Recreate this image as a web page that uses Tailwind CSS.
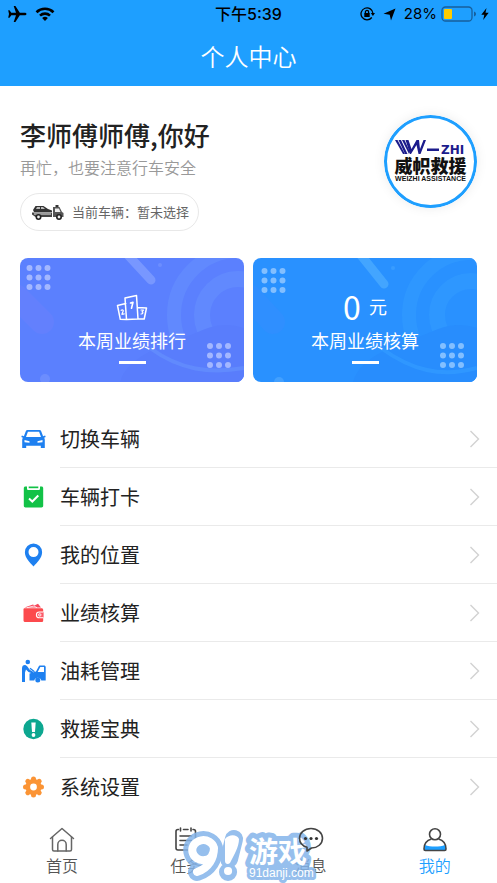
<!DOCTYPE html>
<html lang="zh-Hans">
<head>
  <meta charset="UTF-8">
  <meta name="viewport" content="width=device-width, initial-scale=1">
  <title>个人中心</title>
  <script src="https://cdn.jsdelivr.net/npm/@tailwindcss/browser@4"></script>
</head>
<body class="min-h-screen flex flex-col bg-white text-[#222] font-['Noto_Sans_CJK_SC',sans-serif]">

  <header class="bg-[#1e9fff]">
    <!-- status bar -->
    <div class="grid grid-cols-3 items-center h-7 px-2 text-black font-[Inter,'Noto_Sans_CJK_SC',sans-serif]">
      <div class="flex items-center gap-2">
        <svg class="w-[19px] h-[18px]" viewBox="0 0 19 18"><path d="M18.500 9c0-.9-1-1.200-2-1.200h-4.700L7.400 1H5.700l2.300 6.800H3.300L1.500 5.300H.2L1 9l-.8 3.700h1.300l1.800-2.500H8L5.700 17h1.700l4.400-6.800h4.700c1 0 2-.3 2-1.200z"/></svg>
        <svg class="w-5 h-4" viewBox="0 0 20 16" fill="none" stroke="#000" stroke-width="2.600"><path d="M1.500 6.200a12.300 12.300 0 0 1 17 0"/><path d="M5 9.600a7.300 7.300 0 0 1 10 0"/><path d="M10 15l-2.900-2.900a4.200 4.200 0 0 1 5.800 0z" fill="#000" stroke="none"/></svg>
      </div>
      <div class="text-center text-base font-medium whitespace-nowrap">下午5:39</div>
      <div class="flex items-center justify-end gap-1 whitespace-nowrap">
        <svg class="w-[15px] h-[14px] shrink-0" viewBox="0 0 15 14" fill="none" stroke="#000" stroke-width="1.300"><path d="M11.800 10.500A6 6 0 1 1 13 6.500"/><path d="M10.800 6h4.200l-2.100 3z" fill="#000" stroke="none"/><rect x="4.300" y="6" width="5.400" height="4" fill="#000" stroke="none"/><path d="M5.400 6.500V5a1.600 1.600 0 0 1 3.200 0v1.500"/></svg>
        <svg class="w-[13px] h-[13px] mx-1 shrink-0" viewBox="0 0 13 13"><path d="M12.500.5L8 12.500 6.700 6.700.5 5.800z"/></svg>
        <span class="text-[15px]">28%</span>
        <svg class="w-[36px] h-4 shrink-0" viewBox="0 0 36 16"><rect x="1" y="1" width="30" height="14" rx="3.500" fill="none" stroke="#175f9c" stroke-width="1.300"/><rect x="3" y="3" width="8" height="10" rx="1" fill="#ffcc00"/><path d="M33 5.500c1.300.5 2 1.400 2 2.500s-.7 2-2 2.500z" fill="#175f9c"/></svg>
        <svg class="w-[8px] h-3 shrink-0" viewBox="0 0 8 12"><path d="M5.500 0L.3 6.800h3L2.200 12l5.500-7.200H4.500z"/></svg>
      </div>
    </div>
    <h1 class="h-[58px] leading-[56px] text-center text-2xl font-[350] text-white">个人中心</h1>
  </header>

  <main class="flex-1">
    <section class="flex justify-between px-5 pt-[29px]">
      <div>
        <h2 class="text-[26px] leading-10 font-medium">李师傅师傅,你好</h2>
        <p class="text-base leading-6 font-[350] text-[#999]">再忙，也要注意行车安全</p>
        <button class="flex items-center gap-2 h-[38px] mt-[14px] pl-[10px] pr-[9px] rounded-full border border-[#e8e8e8] text-[13px] text-[#666]">
          <svg class="w-[33px] h-4" viewBox="0 0 33 16"><path d="M1 8.500h20V13H4.500L1 10.500z" fill="#444"/><path d="M2 6l2.500-4h8L17 5l4 1.500V8H3z" fill="#333"/><path d="M5 5l1-2h3v2zM10 3h2l2 2h-4z" fill="#bbb"/><path d="M22 3h6.500L31 8l1.500 1v4H22z" fill="#555"/><path d="M24 4.500h4L29.500 8H24z" fill="#eee"/><path d="M24.500 1h3v2h-3z" fill="#333"/><path d="M3 10h17" stroke="#eee"/><g fill="#eee" stroke="#222" stroke-width="1.600"><circle cx="7.500" cy="13" r="2.200"/><circle cx="28" cy="13" r="2.200"/></g></svg>
          当前车辆：暂未选择
        </button>
      </div>
      <svg class="w-[93px] h-[93px] rounded-full shadow-[0_0_12px_rgba(0,0,0,0.08)]" viewBox="0 0 93 93" role="img" aria-label="威帜救援">
        <circle cx="46.500" cy="46.500" r="45" fill="#fff" stroke="#1e9fff" stroke-width="3"/>
        <g fill="#1c1c8c">
          <path d="M11 25h2.500L21 39h-2z"/><path d="M14.500 25H17L23.500 39H21z"/><path d="M18 25h2.500L26 37l-1 2z"/>
          <path d="M21.500 25h3L27.500 34l5-9h2.500L36 34l3.500-9H42L36.500 39h-2l-2-9L27 39h-1z"/>
          <path d="M43 33.500h12V36H43z"/>
        </g>
        <text x="57" y="39" font-family="DejaVu Sans" font-size="12" font-weight="700" fill="#1c1c8c">ZHI</text>
        <text x="46.500" y="58" text-anchor="middle" font-family="Noto Sans CJK SC" font-size="18" font-weight="900" fill="#111">威帜救援</text>
        <text x="46.500" y="66" text-anchor="middle" font-family="Liberation Sans" font-size="7" font-weight="700" fill="#111">WEIZHI ASSISTANCE</text>
      </svg>
    </section>

    <section class="grid grid-cols-2 gap-[9px] px-5 mt-[27px] text-white text-lg">
      <a href="#" class="relative overflow-hidden h-[124px] rounded-lg bg-[#5b80fe]">
        <svg class="absolute inset-0 w-full h-full" viewBox="0 0 224 124" preserveAspectRatio="none" fill="none">
          <path d="M-4 38L22 64" stroke="#6380fd" stroke-width="24" stroke-linecap="round"/>
          <g stroke="#6189fe"><circle cx="218" cy="57" r="64" stroke-width="14"/><circle cx="218" cy="57" r="36" stroke-width="16"/></g>
          <path d="M100 124c8-28 48-38 78-50 20-9 32-8 46-4v54z" fill="#597dfc"/>
          <path d="M130 90c30 22 60 26 94 20" stroke="#618afd" stroke-width="4"/>
          <path d="M107-4l24 26" stroke="#7897ff" stroke-width="9" stroke-linecap="round"/>
          <circle cx="25" cy="121" r="5" fill="#6c8dfe"/><circle cx="140" cy="7" r="2" fill="#6c8dfe"/>
          <g stroke="#a3b7ff" stroke-width="6" stroke-linecap="round"><path d="M9.500 10h0M18.500 10h0M27.500 10h0M9.500 19.500h0M18.500 19.500h0M27.500 19.500h0M9.500 29h0M18.500 29h0M27.500 29h0"/><path d="M190 88h0M199 88h0M208 88h0M190 97.500h0M199 97.500h0M208 97.500h0M190 107h0M199 107h0M208 107h0"/></g>
        </svg>
        <div class="relative flex flex-col items-center pt-9">
          <svg class="w-8 h-[27px]" viewBox="0 0 32 27" fill="none" stroke="#fff" stroke-width="1.500" stroke-linejoin="round" stroke-linecap="round"><path d="M10.500 25.500L9 4l11.500-2.500L22 25l-11.500.5zM9.800 9.500L1.500 11.500l2.800 13.800 6.200.2M21.500 13.500l9 .5-2.300 11L22 25"/><path d="M14.500 9l2.500-.8-1.500 6" stroke-width="1.600"/><path d="M5.200 16.300c1.500-1 2.800 0 1.700 1.500l-1 2.500 2.300-.4M25 16l2.500.2-1.500 1.600c1.500.3 1 2.300-1 2.200" stroke-width="1.200"/></svg>
          <span class="leading-7 mt-[5px]">本周业绩排行</span>
          <span class="w-[27px] h-[3px] mt-[7px] bg-white"></span>
        </div>
      </a>
      <a href="#" class="relative overflow-hidden h-[124px] rounded-lg bg-[#2991ff]">
        <svg class="absolute inset-0 w-full h-full" viewBox="0 0 224 124" preserveAspectRatio="none" fill="none">
          <path d="M-4 38L20 64" stroke="#2f8fff" stroke-width="24" stroke-linecap="round"/>
          <g stroke="#2e97ff"><circle cx="218" cy="57" r="62" stroke-width="14"/><circle cx="218" cy="57" r="34" stroke-width="16"/></g>
          <path d="M100 124c8-28 48-38 78-50 20-9 32-8 46-4v54z" fill="#288dfd"/>
          <path d="M128 90c30 22 60 30 96 20" stroke="#2f97ff" stroke-width="4"/>
          <path d="M107-4l24 30" stroke="#43a5ff" stroke-width="9" stroke-linecap="round"/>
          <circle cx="26" cy="124" r="5" fill="#42a0ff"/><circle cx="140" cy="10" r="2" fill="#389cff"/>
          <g stroke="#83bfff" stroke-width="6" stroke-linecap="round"><path d="M11.500 13h0M20.500 13h0M29.500 13h0M11.500 22.500h0M20.500 22.500h0M29.500 22.500h0M11.500 32h0M20.500 32h0M29.500 32h0"/><path d="M190 88h0M199 88h0M208 88h0M190 97.500h0M199 97.500h0M208 97.500h0M190 107h0M199 107h0M208 107h0"/></g>
        </svg>
        <div class="relative flex flex-col items-center pt-7">
          <div class="flex items-center gap-2 h-10 leading-9"><span class="text-[32px]">0</span><span>元</span></div>
          <span class="leading-7">本周业绩核算</span>
          <span class="w-[27px] h-[3px] mt-[7px] bg-white"></span>
        </div>
      </a>
    </section>

    <ul class="mt-7 pl-[21px] text-[20px]">
      <li><a href="#" class="flex items-center gap-[14px]">
        <svg class="w-[25px] h-6" viewBox="0 0 25 24" fill="#1e80f0"><path fill-rule="evenodd" d="M6.500 3h12c.8 0 1.400.4 1.700 1.200l1.900 5 2-.7.6 1.600-1.600.7c.5.700.700 1.400.700 2.200V21h-4v-2.300H5.200V21h-4v-8c0-.8.2-1.500.7-2.200l-1.600-.7.600-1.600 2 .7 1.900-5C5.100 3.400 5.700 3 6.500 3zm.4 1.700L5 10h15l-1.900-5.300zM3.500 13v2.200l5 .6v-1.500zm18 0l-5 1.300v1.500l5-.6z"/></svg>
        <span class="flex-1 flex items-center justify-between h-[58px] pr-[17px] border-b border-[#eaeaea]">切换车辆<svg class="w-[11px] h-[18px]" viewBox="0 0 11 18" fill="none" stroke="#d2d2d2" stroke-width="1.400"><path d="M1.500 1l8 8-8 8"/></svg></span></a></li>
      <li><a href="#" class="flex items-center gap-[14px]">
        <svg class="w-[25px] h-6" viewBox="0 0 25 24"><path d="M4.500 1.500H6v2c0 1 .7 1.600 1.500 1.600h10c.8 0 1.500-.6 1.500-1.600v-2h1.500c1 0 1.700.7 1.700 1.700v17.600c0 1-.7 1.700-1.700 1.700h-16c-1 0-1.700-.7-1.700-1.700V3.200c0-1 .7-1.700 1.700-1.700z" fill="#12c247"/><path d="M7.700 1.500h9.600v1.700H7.700z" fill="#12c247"/><path d="M8 13.500l3.300 3 6-6" fill="none" stroke="#fff" stroke-width="2"/></svg>
        <span class="flex-1 flex items-center justify-between h-[58px] pr-[17px] border-b border-[#eaeaea]">车辆打卡<svg class="w-[11px] h-[18px]" viewBox="0 0 11 18" fill="none" stroke="#d2d2d2" stroke-width="1.400"><path d="M1.500 1l8 8-8 8"/></svg></span></a></li>
      <li><a href="#" class="flex items-center gap-[14px]">
        <svg class="w-[25px] h-6" viewBox="0 0 25 24" fill="#1e80f0"><path fill-rule="evenodd" d="M12.500.5a8.600 8.600 0 0 1 8.600 8.700c0 5.500-4.600 9.800-8.600 14.300C8.500 19 3.900 14.700 3.900 9.200A8.600 8.600 0 0 1 12.500.5zm0 3.600a5 5 0 1 0 0 10 5 5 0 0 0 0-10z"/></svg>
        <span class="flex-1 flex items-center justify-between h-[58px] pr-[17px] border-b border-[#eaeaea]">我的位置<svg class="w-[11px] h-[18px]" viewBox="0 0 11 18" fill="none" stroke="#d2d2d2" stroke-width="1.400"><path d="M1.500 1l8 8-8 8"/></svg></span></a></li>
      <li><a href="#" class="flex items-center gap-[14px]">
        <svg class="w-[25px] h-6" viewBox="0 0 25 24"><path d="M3.500 6.500L12 3.500l1.500 1L17 2.800l3 3.700z" fill="#f8485c"/><path d="M6 6.700l7-1.700 3 1.700" fill="none" stroke="#fff" stroke-width=".8"/><path d="M3.500 7.200h17c1 0 1.700.700 1.700 1.700v10.500c0 1-.7 1.700-1.700 1.700h-16c-1 0-2-.7-2-1.700V8.500c0-.8.5-1.300 1-1.300z" fill="#fc4a4d"/><path d="M22.500 11h-4.200a2.900 2.900 0 0 0 0 5.800h4.200" fill="#fb5b69" stroke="#fff" stroke-width="1.100"/><circle cx="18.800" cy="13.900" r="1.200" fill="none" stroke="#fff" stroke-width=".9"/></svg>
        <span class="flex-1 flex items-center justify-between h-[58px] pr-[17px] border-b border-[#eaeaea]">业绩核算<svg class="w-[11px] h-[18px]" viewBox="0 0 11 18" fill="none" stroke="#d2d2d2" stroke-width="1.400"><path d="M1.500 1l8 8-8 8"/></svg></span></a></li>
      <li><a href="#" class="flex items-center gap-[14px]">
        <svg class="w-[25px] h-6" viewBox="0 0 25 24" fill="#1e80f0"><circle cx="6.800" cy="3" r="2.300"/><path d="M1 23V9.500C1 7 2.500 5.800 4.700 6.200 6.500 6.600 7.500 9.500 9 11l3.500 2-1 1.500L7.500 13 5 10.500l-1 3V23z"/><path d="M9 9.300l4.500 3.500" stroke="#1e80f0" stroke-width="1.300"/><path fill-rule="evenodd" d="M8.500 14.500l6.500-2 2.700-5c.3-.7.700-1 1.500-1H23c1 0 1.700.7 1.700 1.500v13.500h-4.400a3.600 3.600 0 0 0-7 0H8.500zM19.300 8l-2.600 5h6.300V8z"/><circle cx="16.800" cy="21" r="2.500"/></svg>
        <span class="flex-1 flex items-center justify-between h-[58px] pr-[17px] border-b border-[#eaeaea]">油耗管理<svg class="w-[11px] h-[18px]" viewBox="0 0 11 18" fill="none" stroke="#d2d2d2" stroke-width="1.400"><path d="M1.500 1l8 8-8 8"/></svg></span></a></li>
      <li><a href="#" class="flex items-center gap-[14px]">
        <svg class="w-[25px] h-6" viewBox="0 0 25 24"><circle cx="12.500" cy="12" r="10.200" fill="#0da790"/><path d="M10.300 5.500h4.400L14 15h-3z" fill="#fff"/><circle cx="12.500" cy="18" r="1.900" fill="#fff"/></svg>
        <span class="flex-1 flex items-center justify-between h-[58px] pr-[17px] border-b border-[#eaeaea]">救援宝典<svg class="w-[11px] h-[18px]" viewBox="0 0 11 18" fill="none" stroke="#d2d2d2" stroke-width="1.400"><path d="M1.500 1l8 8-8 8"/></svg></span></a></li>
      <li><a href="#" class="flex items-center gap-[14px]">
        <svg class="w-[25px] h-6" viewBox="0 0 25 24"><g stroke="#fb9435" stroke-width="5" stroke-linecap="round"><path d="M12.500 4v16M4.500 12h16M6.800 6.300l11.400 11.400M18.200 6.300L6.800 17.700"/></g><circle cx="12.500" cy="12" r="8" fill="#fb9435"/><circle cx="12.500" cy="12" r="3.400" fill="#fff"/></svg>
        <span class="flex-1 flex items-center justify-between h-[58px] pr-[17px]">系统设置<svg class="w-[11px] h-[18px]" viewBox="0 0 11 18" fill="none" stroke="#d2d2d2" stroke-width="1.400"><path d="M1.500 1l8 8-8 8"/></svg></span></a></li>
    </ul>
  </main>

  <nav class="relative grid grid-cols-4 h-[67px] pt-[11px] text-base leading-6 font-[350] text-[#555]">
    <a href="#" class="flex flex-col items-center">
      <svg class="w-[26px] h-[26px]" viewBox="0 0 26 26" fill="none" stroke="#666" stroke-width="1.500" stroke-linecap="round" stroke-linejoin="round"><path d="M1.500 11.500L13 1.500l11.500 10"/><path d="M3.500 10v12.500c0 1 .5 1.500 1.500 1.500h16c1 0 1.500-.5 1.500-1.500V10"/><path d="M8.800 24v-6.500a4.200 4.200 0 0 1 8.400 0V24"/></svg>
      首页</a>
    <a href="#" class="flex flex-col items-center">
      <svg class="w-[26px] h-[26px]" viewBox="0 0 26 26" fill="none" stroke="#444" stroke-width="1.600" stroke-linecap="round"><path d="M5.500 2.500H5c-1.200 0-2 .8-2 2V21c0 1.200.8 2 2 2h15.500c1.200 0 2-.8 2-2V4.500c0-1.200-.8-2-2-2H20M10.500 2.500h4.500"/><path d="M7.500 1v3M18 1v3M7 9h11.500M7 13.500h11.500M7 18h7"/></svg>
      任务</a>
    <a href="#" class="flex flex-col items-center">
      <svg class="w-[26px] h-[26px]" viewBox="0 0 26 26"></svg>
      消息</a>
    <a href="#" class="flex flex-col items-center text-[#1e9fff]" aria-current="page">
      <svg class="w-[26px] h-[26px]" viewBox="0 0 26 26" fill="none" stroke="#444" stroke-width="1.600"><path d="M3 18c5 2 15 2 20 0l1 4.500c0 .7-.5 1-1 1H3c-.6 0-1-.3-1-1z" fill="#1e9fff" stroke="none"/><circle cx="13" cy="7.300" r="5.500"/><path d="M9.500 12C5 13.200 2 17 2 22c0 1 .4 1.500 1.300 1.500h19.400c.9 0 1.300-.5 1.300-1.500 0-5-3-8.800-7.500-10"/></svg>
      我的</a>

    <!-- watermark -->
    <svg class="absolute left-1/2 -translate-x-1/2 bottom-0 w-[140px] h-[58px] overflow-visible pointer-events-none" viewBox="0 0 140 58" stroke-linejoin="round" stroke-linecap="round" role="img" aria-label="91游戏 91danji.com">
      <g opacity=".85">
        <g fill="#84b4ea" stroke="#84b4ea" stroke-width="18">
          <path d="M35 23a11 10 0 1 0-9 12c5 0 9-5 9-12 0 10-5 20-17 24"/>
          <path d="M55 14L50 34M49 47h.1"/>
        </g>
        <g fill="#84b4ea" stroke="#84b4ea" stroke-width="10" font-family="Noto Sans CJK SC">
          <text x="70" y="38" font-size="29" font-weight="700">游戏</text>
          <text x="70" y="52" font-size="12" font-family="Liberation Sans" stroke-width="6">91danji.com</text>
        </g>
      </g>
      <g fill="none" stroke="#fff" stroke-width="8">
        <path d="M35 23a11 10 0 1 0-9 12c5 0 9-5 9-12 0 10-5 20-17 24"/>
        <path d="M46 14c4-5 12-5 14 0 0 8-5 16-9 24-2 2-5 1-5-2z" fill="#fff" stroke="none"/>
        <path d="M49 46h.1"/>
      </g>
      <g fill="#fff" font-family="Noto Sans CJK SC">
        <text x="70" y="38" font-size="29" font-weight="700">游戏</text>
        <text x="70" y="52" font-size="12" font-family="Liberation Sans">91danji.com</text>
      </g>
      <!-- message bubble stays readable above the mark -->
      <g transform="translate(119 1)" fill="none" stroke="#444" stroke-width="1.600" stroke-linejoin="round"><path d="M13 2.500c6.500 0 11.500 4.200 11.500 9.800S19.500 22 13.500 22L9 25v-3.700c-4.500-1.300-7.500-4.700-7.500-9C1.500 6.700 6.500 2.500 13 2.500z"/><g fill="#333" stroke="none"><circle cx="7.500" cy="12.500" r="1.600"/><circle cx="13" cy="12.500" r="1.600"/><circle cx="18.500" cy="12.500" r="1.600"/></g></g>
    </svg>
  </nav>
</body>
</html>
